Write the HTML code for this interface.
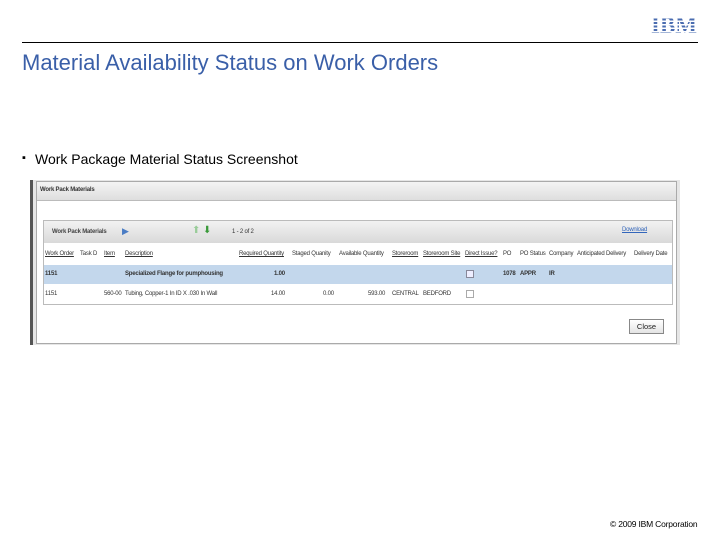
<!DOCTYPE html>
<html><head><style>
body{margin:0;width:720px;height:540px;background:#fff;position:relative;overflow:hidden;font-family:"Liberation Sans",sans-serif}
.a{position:absolute;white-space:nowrap}
.s{font-size:6px;color:#333;letter-spacing:-0.2px}
.u{text-decoration:underline}
.b{font-weight:bold}
</style></head><body>
<div class="a" style="left:651px;top:15px;width:48px;height:22px;font:bold 23px/22px 'Liberation Serif',serif;color:#4a6cb0;letter-spacing:0px">IBM</div>
<div class="a" style="left:650px;top:15px;width:50px;height:22px;background:repeating-linear-gradient(transparent 0 2px,#fff 2px 3.5px);"></div>
<div class="a" style="left:22px;top:42px;width:676px;height:1px;background:#000"></div>
<div class="a" style="left:22px;top:50px;font-size:22px;color:#3a5fa8">Material Availability Status on Work Orders</div>
<div class="a" style="left:22px;top:152px;font-size:11px;color:#000">▪</div>
<div class="a" style="left:35px;top:151px;font-size:14px;color:#000">Work Package Material Status Screenshot</div>

<div class="a" style="left:30px;top:180px;width:650px;height:165px;background:#e6e6e6"></div>
<div class="a" style="left:30px;top:180px;width:3px;height:165px;background:#555"></div>
<div class="a" style="left:36px;top:181px;width:641px;height:163px;background:#fff;border:1px solid #aaa;box-sizing:border-box"></div>
<div class="a" style="left:37px;top:182px;width:639px;height:18px;background:linear-gradient(#f4f4f4,#dedede);border-bottom:1px solid #bbb"></div>
<div class="a s b" style="left:40px;top:187px;color:#333">Work Pack Materials</div>

<div class="a" style="left:43px;top:220px;width:630px;height:85px;border:1px solid #bbb;box-sizing:border-box;background:#fff"></div>
<div class="a" style="left:44px;top:221px;width:628px;height:22px;background:linear-gradient(#f2f2f2,#d9d9d9)"></div>
<div class="a s b" style="left:52px;top:229px;color:#444">Work Pack Materials</div>
<div class="a" style="left:122px;top:226px;font-size:9px;color:#4a7cc4">▶</div>
<div class="a" style="left:203px;top:225px;font-size:10px;color:#3a9a3a">⬇</div>
<div class="a" style="left:192px;top:225px;font-size:10px;color:#9c9">⬆</div>
<div class="a s" style="left:232px;top:229px">1 - 2 of 2</div>
<div class="a s u" style="left:622px;top:227px;color:#3366bb">Download</div>
<div class="a" style="left:44px;top:243px;width:628px;height:22px;background:#fff;border-bottom:1px solid #ccc"></div>
<div class="a" style="left:44px;top:265px;width:628px;height:19px;background:#c3d7ec;border-bottom:1px solid #aac"></div>
<div class="a" style="left:44px;top:284px;width:628px;height:20px;background:#fff"></div>

<div class="a s u" style="left:45px;top:251px">Work Order</div>
<div class="a s" style="left:80px;top:251px">Task D</div>
<div class="a s u" style="left:104px;top:251px">Item</div>
<div class="a s u" style="left:125px;top:251px">Description</div>
<div class="a s u" style="left:239px;top:251px">Required Quantity</div>
<div class="a s" style="left:292px;top:251px">Staged Quanity</div>
<div class="a s" style="left:339px;top:251px">Available Quantity</div>
<div class="a s u" style="left:392px;top:251px">Storeroom</div>
<div class="a s u" style="left:423px;top:251px">Storeroom Site</div>
<div class="a s u" style="left:465px;top:251px">Direct Issue?</div>
<div class="a s" style="left:503px;top:251px">PO</div>
<div class="a s" style="left:520px;top:251px">PO Status</div>
<div class="a s" style="left:549px;top:251px">Company</div>
<div class="a s" style="left:577px;top:251px">Anticipated Delivery</div>
<div class="a s" style="left:634px;top:251px">Delivery Date</div>

<div class="a s b" style="left:45px;top:271px">1151</div>
<div class="a s b" style="left:125px;top:271px">Specialized Flange for pumphousing</div>
<div class="a s b" style="left:274px;top:271px">1.00</div>
<div class="a" style="left:466px;top:270px;width:6px;height:6px;border:1px solid #889;background:#eef"></div>
<div class="a s b" style="left:503px;top:271px">1078</div>
<div class="a s b" style="left:520px;top:271px">APPR</div>
<div class="a s b" style="left:549px;top:271px">IR</div>

<div class="a s" style="left:45px;top:291px">1151</div>
<div class="a s" style="left:104px;top:291px">560-00</div>
<div class="a s" style="left:125px;top:291px">Tubing, Copper-1 In ID X .030 In Wall</div>
<div class="a s" style="left:271px;top:291px">14.00</div>
<div class="a s" style="left:323px;top:291px">0.00</div>
<div class="a s" style="left:368px;top:291px">593.00</div>
<div class="a s" style="left:392px;top:291px">CENTRAL</div>
<div class="a s" style="left:423px;top:291px">BEDFORD</div>
<div class="a" style="left:466px;top:290px;width:6px;height:6px;border:1px solid #aaa"></div>

<div class="a" style="left:629px;top:319px;width:35px;height:15px;border:1px solid #888;box-sizing:border-box;background:linear-gradient(#fff,#e4e4e4);font-size:7.5px;text-align:center;line-height:13px;color:#222">Close</div>

<div class="a" style="left:610px;top:519px;font-size:8.5px;color:#000;letter-spacing:-0.2px">© 2009 IBM Corporation</div>
</body></html>
